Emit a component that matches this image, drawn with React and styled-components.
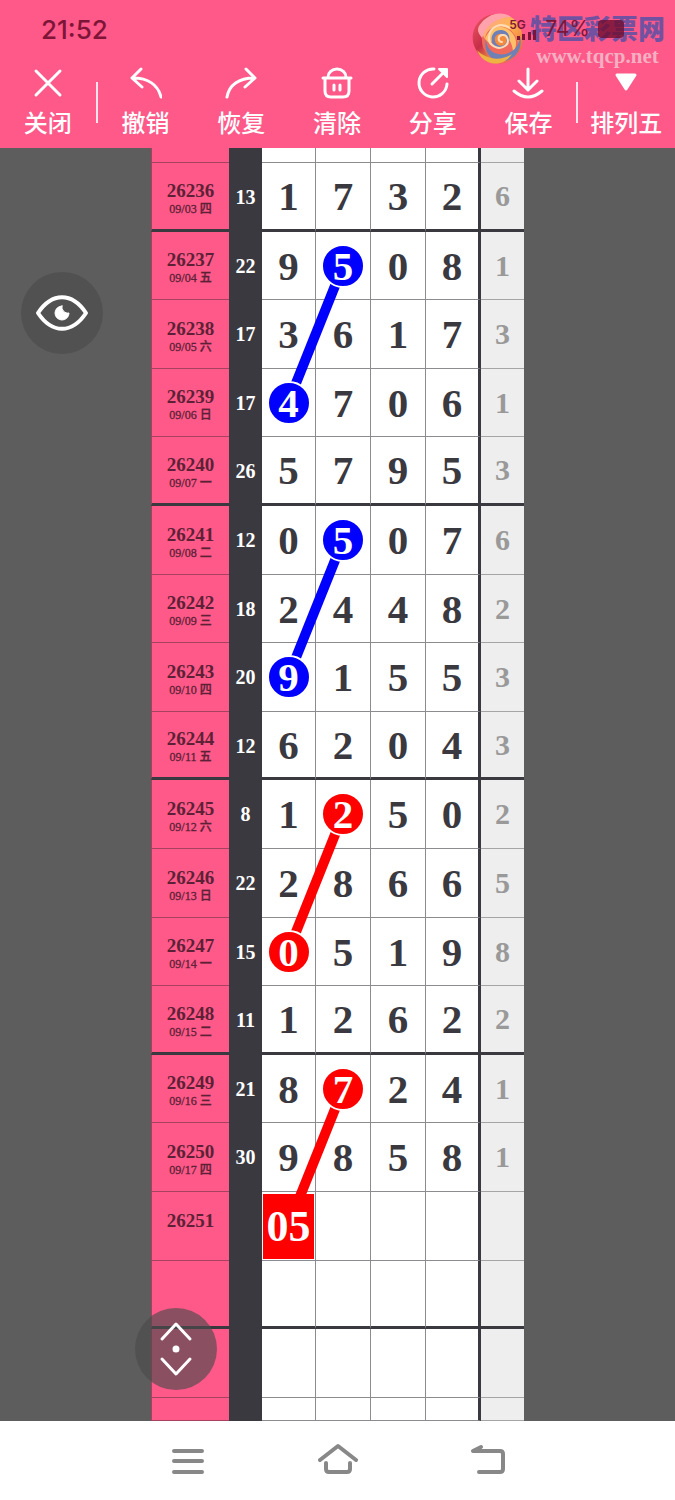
import React from 'react'

import styled, { createGlobalStyle, css } from 'styled-components'

const pink = '#ff5989'
const ink = '#3a393f'
const blue = '#0000fe'
const red = '#fe0000'

const TOP_ROW = 15
const ROW = 68.6

const GlobalStyle = createGlobalStyle`
  * {
    box-sizing: border-box;
  }

  body {
    margin: 0;
    background: #fff;
    font-family: Inter, 'Noto Sans CJK SC', sans-serif;
  }

  button {
    border: 0;
    padding: 0;
    background: none;
    color: inherit;
    font: inherit;
    cursor: pointer;
  }
`

const Page = styled.div`
  display: flex;
  flex-direction: column;
  min-height: 100vh;
`

const Header = styled.header`
  position: relative;
  display: flex;
  flex-direction: column;
  height: 148px;
  background: ${pink};
`

const StatusBar = styled.div`
  position: relative;
  z-index: 1;
  display: flex;
  align-items: center;
  justify-content: space-between;
  height: 58px;
  padding: 0 51px 0 41px;
  color: #7d1538;
  pointer-events: none;
`

const Clock = styled.time`
  font-size: 26px;
  font-weight: 500;
`

const StatusGroup = styled.div`
  display: flex;
  align-items: center;
  gap: 8px;
`

const Signal = styled.div`
  display: flex;
  flex-direction: column;
  width: 28px;
  font-size: 12px;
  font-weight: 600;
  line-height: 11px;

  svg {
    align-self: flex-end;
  }
`

const Percent = styled.span`
  font-size: 21px;
  line-height: 24px;
`

const Battery = styled.span`
  width: 26px;
  height: 18px;
  border-radius: 4px;
  background: rgba(110, 14, 50, 0.8);
`

const Watermark = styled.a`
  position: absolute;
  top: 8px;
  right: 10px;
  display: flex;
  align-items: center;
  gap: 6px;
  text-decoration: none;
`

const WatermarkText = styled.span`
  display: flex;
  flex-direction: column;
  align-items: center;
  padding-top: 4px;
`

const WatermarkName = styled.span`
  color: rgba(60, 80, 170, 0.72);
  font-family: 'Noto Sans CJK SC', sans-serif;
  font-size: 27px;
  font-weight: 900;
  line-height: 32px;
`

const WatermarkUrl = styled.span`
  color: rgba(240, 205, 215, 0.75);
  font-family: 'Liberation Serif', serif;
  font-size: 21px;
  font-weight: 700;
  line-height: 24px;
`

const Toolbar = styled.nav`
  display: flex;
  align-items: flex-start;
  padding: 9px 1px 0 0;
  color: #fff;
`

const Tool = styled.button`
  display: flex;
  flex: 1;
  flex-direction: column;
  align-items: center;
  gap: 7px;
  min-width: 0;
  font-family: 'Noto Sans CJK SC', sans-serif;
  font-size: 24px;
  font-weight: 500;
  line-height: 32px;
  white-space: nowrap;

  svg {
    display: block;
  }
`

const Divider = styled.span`
  width: 2px;
  height: 41px;
  margin-top: 15px;
  background: #ffe3ec;
`

const Board = styled.main`
  position: relative;
  flex: 1;
  background: #5d5d5d;
`

const Sheet = styled.div`
  position: relative;
  width: 373px;
  margin: 0 auto;
`

const Table = styled.table`
  width: 100%;
  table-layout: fixed;
  border-collapse: separate;
  border-spacing: 0;
  background: #fff;
  color: ${ink};
  font-family: 'Liberation Serif', 'Noto Sans CJK SC', serif;
  font-weight: 700;
`

const Cell = styled.td`
  padding: 0;
  border-right: 1px solid #8c8c90;
  border-bottom: 1px solid #8c8c90;
  font-size: 41px;
  line-height: 44px;
  text-align: center;
  vertical-align: middle;

  ${({ $last }) =>
    $last &&
    css`
      border-right: 3px solid ${ink};
    `}
`

const IssueCell = styled.th`
  padding: 5px 0 0;
  border-left: 1px solid #a8405f;
  border-bottom: 1px solid #a8405f;
  background: ${pink};
  color: #5c2136;
  font-weight: 700;
`

const Issue = styled.div`
  font-size: 19px;
  line-height: 20px;
`

const DateText = styled.div`
  height: 16px;
  font-family: 'Liberation Serif', 'Noto Sans CJK SC', serif;
  font-size: 12px;
  font-weight: 500;
  line-height: 16px;
  -webkit-text-stroke: 0.3px;
`

const SumCell = styled.td`
  padding: 0;
  background: ${ink};
  color: #fff;
  font-size: 20px;
  text-align: center;
`

const TailCell = styled.td`
  padding: 0;
  border-bottom: 1px solid #a5a5a5;
  background: #eee;
  color: #999;
  font-size: 30px;
  line-height: 32px;
  text-align: center;
`

const Row = styled.tr`
  height: 69px;

  &:nth-child(5n + 3),
  &:nth-child(5n) {
    height: 68px;
  }

  ${({ $thick }) =>
    $thick &&
    css`
      ${Cell}, ${IssueCell}, ${TailCell} {
        border-bottom: 3px solid ${ink};
      }
    `}
`

const EdgeRow = styled.tr`
  height: ${({ $height }) => $height}px;
`

const Ball = styled.span`
  position: relative;
  z-index: 2;
  display: block;
  width: 44px;
  height: 44px;
  margin: 0 auto;
  border: 2px solid #fff;
  border-radius: 50%;
  background: ${({ $color }) => $color};
  color: #fff;
  line-height: 40px;
`

const Pick = styled.span`
  position: relative;
  z-index: 2;
  display: block;
  width: 51px;
  height: 65px;
  margin: 0 auto;
  background: ${red};
  color: #fff;
  font-size: 44px;
  line-height: 65px;
`

const Links = styled.svg`
  position: absolute;
  inset: 0;
  z-index: 1;
  width: 100%;
  height: 100%;
  pointer-events: none;
`

const FloatButton = styled.button`
  position: absolute;
  z-index: 3;
  display: flex;
  align-items: center;
  justify-content: center;
  width: 82px;
  height: 82px;
  border-radius: 50%;
  background: rgba(76, 76, 76, 0.65);
`

const EyeButton = styled(FloatButton)`
  top: 124px;
  left: 21px;
`

const PageButton = styled(FloatButton)`
  bottom: 31px;
  left: -16px;
`

const SystemBar = styled.footer`
  display: flex;
  justify-content: center;
  height: 79px;
  background: #fff;
`

const SystemButton = styled.button`
  display: flex;
  align-items: center;
  justify-content: center;
  width: 150px;
`

const draws = [
  ['26236', '09/03 四', 13, '1732', 6],
  ['26237', '09/04 五', 22, '9508', 1],
  ['26238', '09/05 六', 17, '3617', 3],
  ['26239', '09/06 日', 17, '4706', 1],
  ['26240', '09/07 一', 26, '5795', 3],
  ['26241', '09/08 二', 12, '0507', 6],
  ['26242', '09/09 三', 18, '2448', 2],
  ['26243', '09/10 四', 20, '9155', 3],
  ['26244', '09/11 五', 12, '6204', 3],
  ['26245', '09/12 六', 8, '1250', 2],
  ['26246', '09/13 日', 22, '2866', 5],
  ['26247', '09/14 一', 15, '0519', 8],
  ['26248', '09/15 二', 11, '1262', 2],
  ['26249', '09/16 三', 21, '8724', 1],
  ['26250', '09/17 四', 30, '9858', 1],
  ['26251', '', '', '', ''],
  ['', '', '', '', ''],
  ['', '', '', '', '']
]

// key is row-column
const balls = {
  '1-1': blue,
  '3-0': blue,
  '5-1': blue,
  '7-0': blue,
  '9-1': red,
  '11-0': red,
  '13-1': red
}

const links = [
  { from: 1, color: blue },
  { from: 5, color: blue },
  { from: 9, color: red },
  { from: 13, color: red }
]

const rowCenter = row => TOP_ROW + ROW * (row + 0.5)

const Icon = ({ size = 32, width = 4, color = '#fff', children }) => (
  <svg
    width={size}
    height={size}
    viewBox={`0 0 ${size} ${size}`}
    fill="none"
    stroke={color}
    strokeWidth={width}
    strokeLinecap="round"
    strokeLinejoin="round"
    aria-hidden="true"
  >
    {children}
  </svg>
)

const Logo = () => (
  <svg width="52" height="54" viewBox="0 0 52 54" aria-hidden="true">
    <defs>
      <linearGradient id="rim" x1="0" y1="0" x2="0.6" y2="1">
        <stop offset="0" stopColor="#ee5a62" />
        <stop offset="0.6" stopColor="#c52d48" />
        <stop offset="1" stopColor="#f0a03c" />
      </linearGradient>
      <linearGradient id="gold" x1="0" y1="0" x2="1" y2="1">
        <stop offset="0" stopColor="#ff9fa0" />
        <stop offset="0.5" stopColor="#ffb650" />
        <stop offset="1" stopColor="#e8653c" />
      </linearGradient>
    </defs>
    <circle cx="26" cy="28" r="25" fill="#f0695a" />
    <path d="M24 3C7 4-1 18 1 31c3 13 15 22 28 21-13-5-20-13-19-26C10 16 15 7 24 3Z" fill="url(#rim)" />
    <path d="M10 14C19-1 39 1 46 13c6 9 6 21 1 29 0-12-4-23-15-26-11-2-18 3-19 12-3-5-5-9-3-14Z" fill="url(#gold)" />
    <path d="M7 15C16 1 31 0 39 6 26 6 15 12 10 27 6 22 5 19 7 15Z" fill="#ffa2ab" />
    <path d="M13 28c4-11 14-16 24-9 8 6 9 15 4 23 0-10-5-17-13-17-6 0-9 4-9 9l-6-6Z" fill="#ffc06a" />
    <path d="M14 28c0 13 14 20 26 12 5-3 8-9 8-15 3 12-4 24-17 25C19 51 11 41 14 28Z" fill="#6f80b4" />
    <path d="M5 39c8 9 23 12 35 4-5 8-14 12-24 8-5-2-9-7-11-12Z" fill="#efb344" />
    <path d="M20 31c-2-7 3-13 10-12 8 1 10 11 4 16-5 4-12 2-14-4Z" fill="#6d80b8" />
    <path d="M23 30c-1-5 3-8 7-7 5 1 6 8 2 11-4 2-8 0-9-4Z" fill="#f58a3c" />
    <path
      d="M30 31c-4 0-5-6 0-7 6-1 8 8 3 11-7 5-17-1-16-9 1-11 12-15 21-9"
      fill="none"
      stroke="#ffdcb8"
      strokeWidth="2"
      strokeLinecap="round"
    />
  </svg>
)

const App = () => (
  <Page>
    <GlobalStyle />
    <Header>
      <StatusBar>
        <Clock>21:52</Clock>
        <StatusGroup>
          <Signal>
            5G
            <svg width="20" height="10" viewBox="0 0 20 10" fill="currentColor" aria-hidden="true">
              <path d="M0 6h3v4H0zM5 4h3v6H5zM11 2h3v8h-3zM16 0h3v10h-3z" />
            </svg>
          </Signal>
          <Percent>74%</Percent>
          <Battery />
        </StatusGroup>
      </StatusBar>
      <Watermark href="#">
        <Logo />
        <WatermarkText>
          <WatermarkName>特区彩票网</WatermarkName>
          <WatermarkUrl>www.tqcp.net</WatermarkUrl>
        </WatermarkText>
      </Watermark>
      <Toolbar>
        <Tool>
          <Icon width={3}>
            <path d="M4 4l24 24M28 4L4 28" />
          </Icon>
          关闭
        </Tool>
        <Divider />
        <Tool>
          <Icon width={3}>
            <path d="M11 2L2 11l10 9M3 11c15 0 25 7 28 19" />
          </Icon>
          撤销
        </Tool>
        <Tool>
          <Icon width={3}>
            <path d="M21 2l9 9-10 9M29 11C14 11 4 18 2 30" />
          </Icon>
          恢复
        </Tool>
        <Tool>
          <Icon width={3}>
            <path d="M2 11h28M7 10a9 8 0 0 1 18 0M4 12v12q0 6 6 6h12q6 0 6-6V12M13 18v5M19 18v5" />
          </Icon>
          清除
        </Tool>
        <Tool>
          <Icon width={3}>
            <path d="M17 2A14 14 0 1 0 30 17M15 17L28 4" />
            <path d="M22 2h8v8z" fill="#fff" strokeWidth="2" />
          </Icon>
          分享
        </Tool>
        <Tool>
          <Icon width={3}>
            <path d="M16 2v21M7 14l9 9 9-9M2 24q14 12 28 0" />
          </Icon>
          保存
        </Tool>
        <Divider />
        <Tool>
          <Icon width={3}>
            <path d="M7 8h18l-9 14z" fill="#fff" />
          </Icon>
          排列五
        </Tool>
      </Toolbar>
    </Header>
    <Board>
      <Sheet>
        <Table>
          <colgroup>
            <col style={{ width: 78 }} />
            <col style={{ width: 33 }} />
            <col style={{ width: 54 }} />
            <col style={{ width: 55 }} />
            <col style={{ width: 55 }} />
            <col style={{ width: 55 }} />
            <col style={{ width: 43 }} />
          </colgroup>
          <tbody>
            <EdgeRow $height={TOP_ROW}>
              <IssueCell />
              <SumCell />
              <Cell />
              <Cell />
              <Cell />
              <Cell $last />
              <TailCell />
            </EdgeRow>
            {draws.map(([issue, date, sum, digits, tail], row) => (
              <Row key={row} $thick={row % 4 === 0}>
                <IssueCell scope="row">
                  {issue && (
                    <>
                      <Issue>{issue}</Issue>
                      <DateText>{date}</DateText>
                    </>
                  )}
                </IssueCell>
                <SumCell>{sum}</SumCell>
                {[0, 1, 2, 3].map(col => {
                  const color = balls[`${row}-${col}`]
                  return (
                    <Cell key={col} $last={col === 3}>
                      {color ? <Ball $color={color}>{digits[col]}</Ball> : digits[col]}
                      {issue === '26251' && col === 0 && <Pick>05</Pick>}
                    </Cell>
                  )
                })}
                <TailCell>{tail}</TailCell>
              </Row>
            ))}
            <EdgeRow $height={23}>
              <IssueCell />
              <SumCell />
              <Cell />
              <Cell />
              <Cell />
              <Cell $last />
              <TailCell />
            </EdgeRow>
          </tbody>
        </Table>
        <Links aria-hidden="true">
          {links.map(({ from, color }) => (
            <line
              key={from}
              x1="192"
              y1={rowCenter(from)}
              x2="137"
              y2={rowCenter(from + 2)}
              stroke={color}
              strokeWidth="10"
            />
          ))}
        </Links>
        <PageButton aria-label="翻页">
          <Icon size={60} width={3}>
            <path d="M16 20l14-15 14 15M16 40l14 15 14-15" />
            <circle cx="30" cy="30" r="2" fill="#fff" />
          </Icon>
        </PageButton>
      </Sheet>
      <EyeButton aria-label="显示">
        <Icon size={54}>
          <path d="M3 27C17 6 37 6 51 27 37 48 17 48 3 27Z" />
          <path d="M27 20a7 7 0 1 0 7 7 6 6 0 0 1-7-7Z" fill="#fff" strokeWidth="1" />
        </Icon>
      </EyeButton>
    </Board>
    <SystemBar>
      <SystemButton aria-label="菜单">
        <Icon size={40} color="#888">
          <path d="M6 10h28M6 20h28M6 31h28" />
        </Icon>
      </SystemButton>
      <SystemButton aria-label="主页">
        <Icon size={40} color="#888">
          <path d="M2 19L20 5l18 14M8 22v6q0 3 3 3h18q3 0 3-3v-6" />
        </Icon>
      </SystemButton>
      <SystemButton aria-label="返回">
        <Icon size={40} color="#888">
          <path d="M13 6l-8 4h27q3 0 3 3v15q0 3-3 3H11" />
        </Icon>
      </SystemButton>
    </SystemBar>
  </Page>
)

export default App
